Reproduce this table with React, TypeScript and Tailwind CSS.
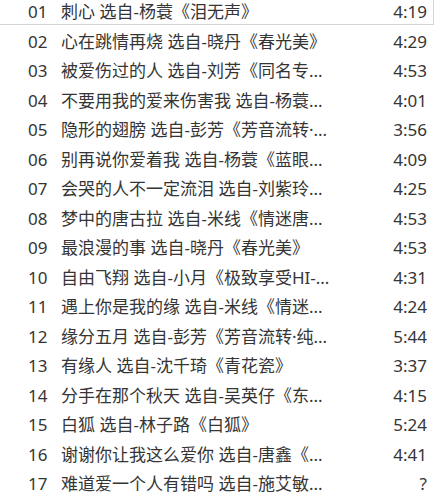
import React from 'react';

type Track = { no: string; title: string; time: string };

const tracks: Track[] = [
  { no: '01', title: '刺心 选自-杨蓑《泪无声》', time: '4:19' },
  { no: '02', title: '心在跳情再烧 选自-晓丹《春光美》', time: '4:29' },
  { no: '03', title: '被爱伤过的人 选自-刘芳《同名专...', time: '4:53' },
  { no: '04', title: '不要用我的爱来伤害我 选自-杨蓑...', time: '4:01' },
  { no: '05', title: '隐形的翅膀 选自-彭芳《芳音流转·...', time: '3:56' },
  { no: '06', title: '别再说你爱着我 选自-杨蓑《蓝眼...', time: '4:09' },
  { no: '07', title: '会哭的人不一定流泪 选自-刘紫玲...', time: '4:25' },
  { no: '08', title: '梦中的唐古拉 选自-米线《情迷唐...', time: '4:53' },
  { no: '09', title: '最浪漫的事 选自-晓丹《春光美》', time: '4:53' },
  { no: '10', title: '自由飞翔 选自-小月《极致享受HI-...', time: '4:31' },
  { no: '11', title: '遇上你是我的缘 选自-米线《情迷...', time: '4:24' },
  { no: '12', title: '缘分五月 选自-彭芳《芳音流转·纯...', time: '5:44' },
  { no: '13', title: '有缘人 选自-沈千琦《青花瓷》', time: '3:37' },
  { no: '14', title: '分手在那个秋天 选自-吴英仔《东...', time: '4:15' },
  { no: '15', title: '白狐 选自-林子路《白狐》', time: '5:24' },
  { no: '16', title: '谢谢你让我这么爱你 选自-唐鑫《...', time: '4:41' },
  { no: '17', title: '难道爱一个人有错吗 选自-施艾敏...', time: '?' },
];

const App: React.FC = () => {
  return (
    <div
      className="w-[445px] h-[503px] overflow-hidden bg-white text-[17px] text-[#353535]"
      style={{ fontFamily: '"Noto Sans", "Noto Sans CJK SC", sans-serif' }}
    >
      <div className="w-[435px] -ml-px -mt-px">
        {tracks.map((t, i) => (
          <div
            key={t.no}
            className={
              i === 0
                ? 'flex items-center h-[26px] mb-[3.5px] border border-[#d4d4d4] pl-[28px] pr-[6px] leading-[24px]'
                : 'flex items-center h-[26px] mb-[3.5px] border border-transparent pl-[28px] pr-[6px] leading-[24px]'
            }
          >
            <span className="w-[33px] shrink-0">{t.no}</span>
            <span className="flex-1 min-w-0 whitespace-nowrap">{t.title}</span>
            <span className="shrink-0 text-right">{t.time}</span>
          </div>
        ))}
      </div>
    </div>
  );
};

export default App;
